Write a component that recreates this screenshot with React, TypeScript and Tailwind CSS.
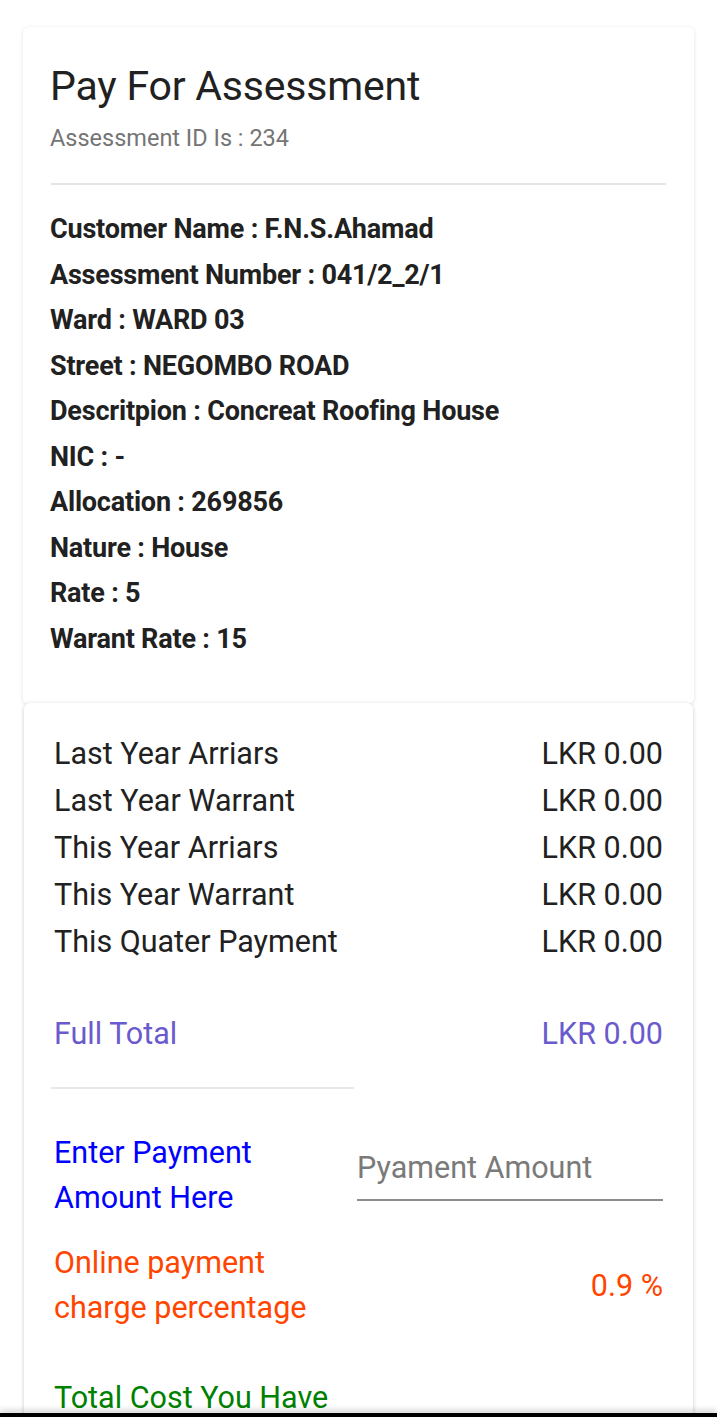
import React from 'react';

const details: [string, string][] = [
  ['Customer Name', 'F.N.S.Ahamad'],
  ['Assessment Number', '041/2_2/1'],
  ['Ward', 'WARD 03'],
  ['Street', 'NEGOMBO ROAD'],
  ['Descritpion', 'Concreat Roofing House'],
  ['NIC', '-'],
  ['Allocation', '269856'],
  ['Nature', 'House'],
  ['Rate', '5'],
  ['Warant Rate', '15'],
];

const charges = [
  'Last Year Arriars',
  'Last Year Warrant',
  'This Year Arriars',
  'This Year Warrant',
  'This Quater Payment',
];

export default function App() {
  return (
    <div className="min-h-screen bg-white font-['Roboto',sans-serif] text-[#212121] pt-[27px]">
      {/* assessment details card */}
      <div className="mx-[23px] rounded-md bg-white shadow-[0_1px_4px_rgba(0,0,0,0.12)] pl-[27px] pr-[28px] pt-[35px] pb-[42px]">
        <h1 className="text-[41px] leading-[48px] font-normal tracking-[-0.2px]">Pay For Assessment</h1>
        <p className="mt-[14px] text-[23.5px] leading-[28px] text-[#757575]">Assessment ID Is : 234</p>
        <div className="mt-[31px] h-[2px] bg-[#e5e5e5] ml-[1px]" />
        <div className="mt-[22px]">
          {details.map(([label, value]) => (
            <div key={label} className="text-[27px] leading-[45.5px] font-bold tracking-[-0.2px]">
              {label} : {value}
            </div>
          ))}
        </div>
      </div>

      {/* payment card */}
      <div className="mx-[24px] -mt-[1px] rounded-md bg-white shadow-[0_1px_4px_rgba(0,0,0,0.2)] px-[30px] pt-[27px] pb-[60px] text-[30.5px]">
        {charges.map((c) => (
          <div key={c} className="flex justify-between leading-[47px]">
            <span>{c}</span>
            <span>LKR 0.00</span>
          </div>
        ))}
        <div className="mt-[45px] flex justify-between leading-[47px] text-[#6a5acd]">
          <span>Full Total</span>
          <span>LKR 0.00</span>
        </div>
        <div className="grid grid-cols-2 -ml-[3px]">
          <div className="mt-[30px] h-[2px] bg-[#e8e8e8] mr-[3px]" />
        </div>
        <div className="mt-[41px] grid grid-cols-2 -ml-[3px]">
          <div className="pl-[3px] text-[#0000ff] leading-[45px]">
            Enter Payment
            <br />
            Amount Here
          </div>
          <div className="pt-[12px]">
            <input
              className="w-full border-b-2 border-[#8c8c8c] bg-transparent pb-[13px] pt-[8px] text-[30.5px] leading-[36px] outline-none placeholder:text-[#7a7a7a]"
              placeholder="Pyament Amount"
            />
          </div>
        </div>
        <div className="mt-[20px] flex items-center justify-between text-[#ff4500] leading-[45px]">
          <span>
            Online payment
            <br />
            charge percentage
          </span>
          <span>0.9 %</span>
        </div>
        <div className="mt-[45px] text-[#008000] leading-[45px]">Total Cost You Have</div>
      </div>

      <div className="fixed bottom-0 left-0 right-0 h-[4px] bg-black shadow-[0_-2px_6px_rgba(0,0,0,0.25)]" />
    </div>
  );
}
